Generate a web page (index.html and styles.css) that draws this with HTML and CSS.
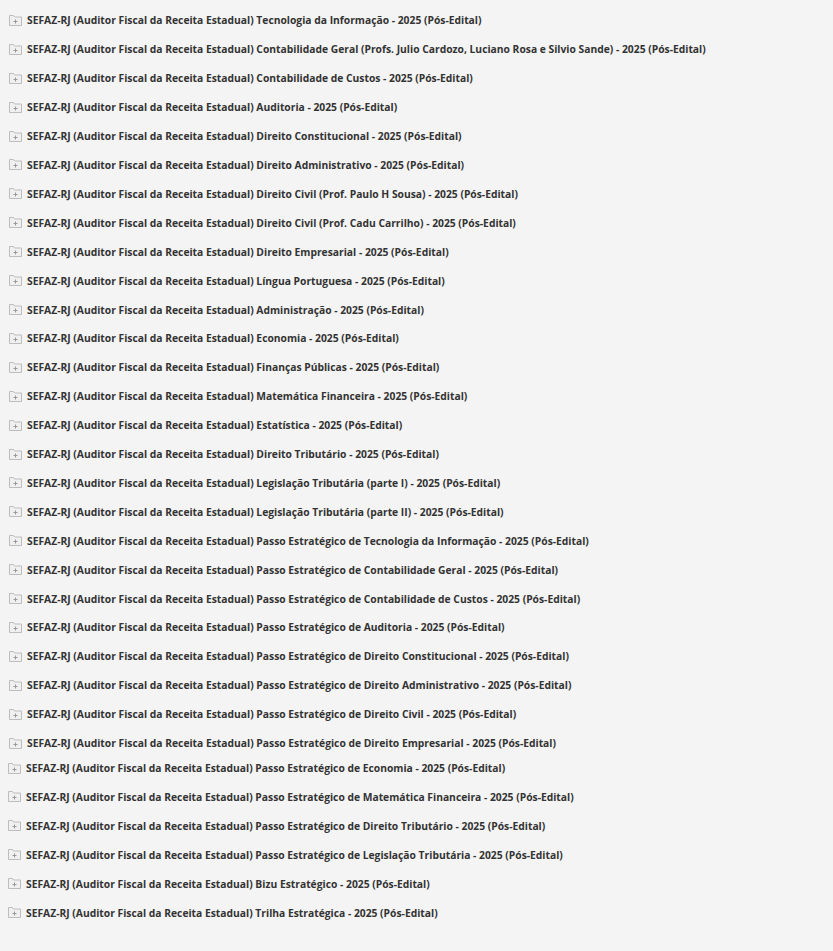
FILE: index.html
```html
<!DOCTYPE html>
<html lang="pt-BR">
<head>
    <meta charset="UTF-8">
    <meta name="viewport" content="width=device-width, initial-scale=1.0">
    <title>Cursos SEFAZ-RJ</title>
    <link rel="stylesheet" href="styles.css">
</head>
<body>
    <!-- Lista de cursos -->
    <ul class="tree" id="tree-main"></ul>
    <ul class="tree tree-extra" id="tree-extra"></ul>

    <script>
        const prefix = 'SEFAZ-RJ (Auditor Fiscal da Receita Estadual) ';
        const main = [
            'Tecnologia da Informação - 2025 (Pós-Edital)',
            'Contabilidade Geral (Profs. Julio Cardozo, Luciano Rosa e Silvio Sande) - 2025 (Pós-Edital)',
            'Contabilidade de Custos - 2025 (Pós-Edital)',
            'Auditoria - 2025 (Pós-Edital)',
            'Direito Constitucional - 2025 (Pós-Edital)',
            'Direito Administrativo - 2025 (Pós-Edital)',
            'Direito Civil (Prof. Paulo H Sousa) - 2025 (Pós-Edital)',
            'Direito Civil (Prof. Cadu Carrilho) - 2025 (Pós-Edital)',
            'Direito Empresarial - 2025 (Pós-Edital)',
            'Língua Portuguesa - 2025 (Pós-Edital)',
            'Administração - 2025 (Pós-Edital)',
            'Economia - 2025 (Pós-Edital)',
            'Finanças Públicas - 2025 (Pós-Edital)',
            'Matemática Financeira - 2025 (Pós-Edital)',
            'Estatística - 2025 (Pós-Edital)',
            'Direito Tributário - 2025 (Pós-Edital)',
            'Legislação Tributária (parte I) - 2025 (Pós-Edital)',
            'Legislação Tributária (parte II) - 2025 (Pós-Edital)',
            'Passo Estratégico de Tecnologia da Informação - 2025 (Pós-Edital)',
            'Passo Estratégico de Contabilidade Geral - 2025 (Pós-Edital)',
            'Passo Estratégico de Contabilidade de Custos - 2025 (Pós-Edital)',
            'Passo Estratégico de Auditoria - 2025 (Pós-Edital)',
            'Passo Estratégico de Direito Constitucional - 2025 (Pós-Edital)',
            'Passo Estratégico de Direito Administrativo - 2025 (Pós-Edital)',
            'Passo Estratégico de Direito Civil - 2025 (Pós-Edital)',
            'Passo Estratégico de Direito Empresarial - 2025 (Pós-Edital)'
        ];
        const extra = [
            'Passo Estratégico de Economia - 2025 (Pós-Edital)',
            'Passo Estratégico de Matemática Financeira - 2025 (Pós-Edital)',
            'Passo Estratégico de Direito Tributário - 2025 (Pós-Edital)',
            'Passo Estratégico de Legislação Tributária - 2025 (Pós-Edital)',
            'Bizu Estratégico - 2025 (Pós-Edital)',
            'Trilha Estratégica - 2025 (Pós-Edital)'
        ];
        const icon = `<svg class="folder" width="13" height="12" viewBox="0 0 13 12">
            <path d="M0.5 1.5h4l1 1.5h7v8.5h-12z" fill="#f0f0f0" stroke="#bdbdbd"/>
            <path d="M4.5 7.5h4M6.5 5.5v4" stroke="#999"/>
        </svg>`;

        function fill(id, items) {
            const list = document.getElementById(id);
            items.forEach(name => {
                const li = document.createElement('li');
                li.innerHTML = `${icon}<span>${prefix}${name}</span>`;
                list.appendChild(li);
            });
        }
        fill('tree-main', main);
        fill('tree-extra', extra);
    </script>
</body>
</html>
```
FILE: styles.css
```css
body {
    margin: 0;
    background-color: #f4f4f4;
    font-family: "Open Sans", sans-serif;
}

.tree {
    list-style: none;
    margin: 0;
    padding: 6px 0 0 9px;
}

.tree li {
    display: flex;
    align-items: center;
    gap: 5px;
    height: 28.92px;
    font-size: 10.3px;
    font-weight: 700;
    color: #333;
    white-space: nowrap;
}

.folder {
    flex-shrink: 0;
    margin-top: -1px;
}

.tree-extra {
    padding: 0 0 0 8px;
    margin-top: -4px;
}
```
